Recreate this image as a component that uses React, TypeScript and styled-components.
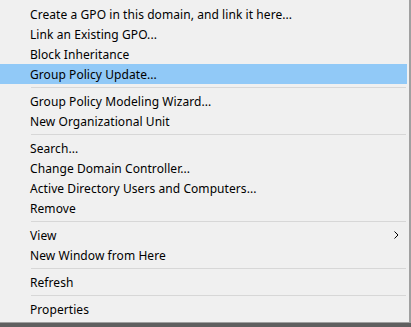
import React from 'react';
import styled, { createGlobalStyle } from 'styled-components';

const GlobalStyle = createGlobalStyle`
  html, body {
    margin: 0;
    padding: 0;
    background: #5f5f5f;
  }
  body {
    font-family: 'Noto Sans', 'Open Sans', sans-serif;
    font-size: 12px;
    color: #000;
  }
`;

const Page = styled.div`
  width: 411px;
  height: 327px;
  overflow: hidden;
  background: #5f5f5f;
`;

const Menu = styled.div`
  width: 409px;
  padding: 4px 0 3px 0;
  background: #f0f0f0;
  border-right: 2px solid #a0a0a0;
  border-bottom: 1px solid #a0a0a0;
  display: flex;
  flex-direction: column;
`;

const Item = styled.div<{ active?: boolean }>`
  height: 20px;
  margin-right: 2px;
  padding-left: 30px;
  display: flex;
  align-items: center;
  justify-content: space-between;
  background: ${(p) => (p.active ? '#91c9f7' : 'transparent')};
  white-space: nowrap;
`;

const Label = styled.span`
  line-height: 20px;
  padding-top: 1px;
  letter-spacing: 0.07px;
`;

const Separator = styled.div`
  height: 7px;
  display: flex;
  align-items: center;
  padding-left: 31px;
  margin-right: 3px;

  &::after {
    content: '';
    flex: 1;
    height: 1px;
    background: #d7d7d7;
  }
`;

const Arrow = styled.svg`
  width: 5px;
  height: 8px;
  margin-right: 8px;
`;

type Entry = { label?: string; active?: boolean; sub?: boolean };

const entries: Entry[] = [
  { label: 'Create a GPO in this domain, and link it here...' },
  { label: 'Link an Existing GPO...' },
  { label: 'Block Inheritance' },
  { label: 'Group Policy Update...', active: true },
  {},
  { label: 'Group Policy Modeling Wizard...' },
  { label: 'New Organizational Unit' },
  {},
  { label: 'Search...' },
  { label: 'Change Domain Controller...' },
  { label: 'Active Directory Users and Computers...' },
  { label: 'Remove' },
  {},
  { label: 'View', sub: true },
  { label: 'New Window from Here' },
  {},
  { label: 'Refresh' },
  {},
  { label: 'Properties' },
];

const App: React.FC = () => {
  return (
    <Page>
      <GlobalStyle />
      <Menu>
        {entries.map((e, i) =>
          e.label ? (
            <Item key={i} active={e.active}>
              <Label>{e.label}</Label>
              {e.sub && (
                <Arrow viewBox="0 0 5 8">
                  <path d="M0.5 0.5 L4 4 L0.5 7.5" fill="none" stroke="#000" strokeWidth="1" />
                </Arrow>
              )}
            </Item>
          ) : (
            <Separator key={i} />
          )
        )}
      </Menu>
    </Page>
  );
};

export default App;
